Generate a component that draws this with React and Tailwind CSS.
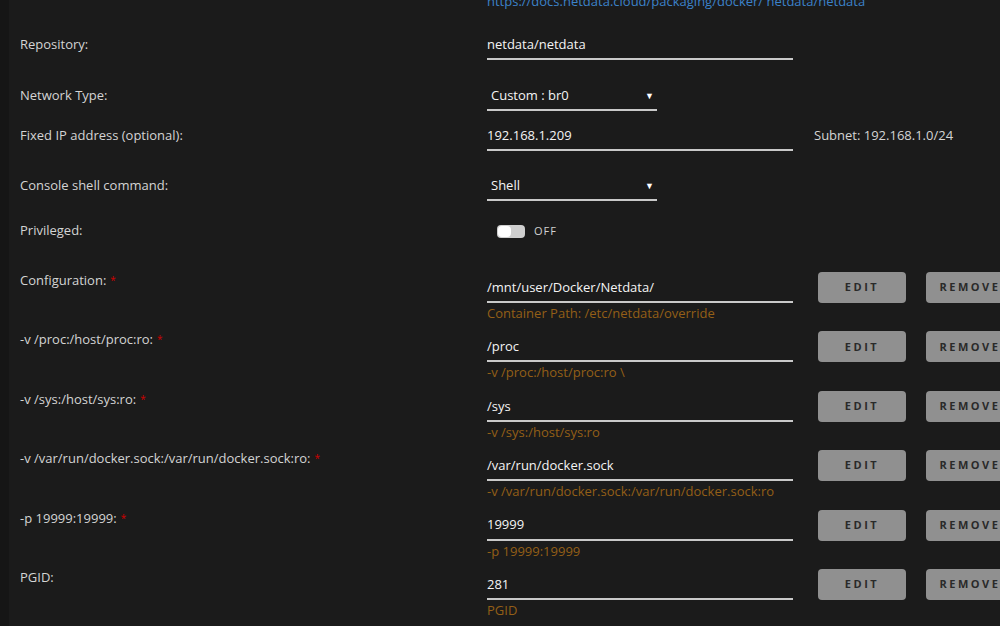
import { useState } from 'react'

const font = { fontFamily: '"Open Sans", "Noto Sans", sans-serif' }

const paths = [
  {
    label: 'Configuration:',
    value: '/mnt/user/Docker/Netdata/',
    help: 'Container Path: /etc/netdata/override',
    required: true
  },
  { label: '-v /proc:/host/proc:ro:', value: '/proc', help: '-v /proc:/host/proc:ro \\', required: true },
  { label: '-v /sys:/host/sys:ro:', value: '/sys', help: '-v /sys:/host/sys:ro', required: true },
  {
    label: '-v /var/run/docker.sock:/var/run/docker.sock:ro:',
    value: '/var/run/docker.sock',
    help: '-v /var/run/docker.sock:/var/run/docker.sock:ro',
    required: true
  },
  { label: '-p 19999:19999:', value: '19999', help: '-p 19999:19999', required: true },
  { label: 'PGID:', value: '281', help: 'PGID', required: false }
]

const Label = ({ children, required }) => (
  <div className="w-[467px] shrink-0 text-[13px] text-[#d4d4d4] whitespace-nowrap">
    {children}
    {required && <span className="ml-1 text-[10px] align-top text-[#d00000]">*</span>}
  </div>
)

const TextField = ({ value, className = 'w-[306px]' }) => (
  <div className={`${className} h-[31px] pt-[2px] flex items-center border-b-2 border-[#c9c9c9] text-[13px] font-medium text-[#f4f4f4]`}>
    {value}
  </div>
)

const SelectField = ({ value }) => (
  <div className="w-[170px] h-[31px] pt-[2px] flex items-center justify-between pl-1 pr-[3px] border-b-2 border-[#c9c9c9] text-[13px] font-medium text-[#f4f4f4]">
    <span>{value}</span>
    <span className="text-[9px] text-white">▼</span>
  </div>
)

const Button = ({ children }) => (
  <button className="w-[88px] h-[31px] shrink-0 rounded-[4px] bg-[#909090] text-[11px] font-bold tracking-[2.5px] text-[#2a2a2a]">
    {children}
  </button>
)

const Toggle = () => {
  const [on, setOn] = useState(false)
  return (
    <div className="flex items-center gap-[9px] pl-[10px]">
      <button
        onClick={() => setOn(!on)}
        className="w-[28px] h-[13px] rounded-[4px] bg-[#cfcfcf] flex items-center p-[1px]"
      >
        <span className="w-[13px] h-[11px] rounded-[4px] bg-white" />
      </button>
      <span className="text-[11px] tracking-[1px] text-[#d0d0d0]">{on ? 'ON' : 'OFF'}</span>
    </div>
  )
}

const App = () => {
  return (
    <div className="w-[1000px] h-[626px] overflow-hidden flex bg-[#1b1b1b]" style={font}>
      <div className="w-[9px] shrink-0 bg-[#161616]" />
      <div className="flex-1 pl-[11px] overflow-hidden">
        <div className="flex h-[18px] -mt-[7px] items-center">
          <div className="w-[467px] shrink-0" />
          <span className="text-[13px] text-[#3c82c9] whitespace-nowrap">
            https://docs.netdata.cloud/packaging/docker/ netdata/netdata
          </span>
        </div>

        <div className="flex items-center mt-[18px]">
          <Label>Repository:</Label>
          <TextField value="netdata/netdata" />
        </div>

        <div className="flex items-center mt-[20px]">
          <Label>Network Type:</Label>
          <SelectField value="Custom : br0" />
        </div>

        <div className="flex items-center mt-[9px]">
          <Label>Fixed IP address (optional):</Label>
          <TextField value="192.168.1.209" />
          <span className="ml-[21px] text-[13px] text-[#d4d4d4] whitespace-nowrap">Subnet: 192.168.1.0/24</span>
        </div>

        <div className="flex items-center mt-[19px]">
          <Label>Console shell command:</Label>
          <SelectField value="Shell" />
        </div>

        <div className="flex items-center mt-[14px] h-[32px]">
          <Label>Privileged:</Label>
          <Toggle />
        </div>

        <div className="mt-[25px]">
          {paths.map((p) => (
            <div key={p.label} className="flex h-[59.4px]">
              <div className="leading-4">
                <Label required={p.required}>{p.label}</Label>
              </div>
              <div className="w-[306px] shrink-0">
                <TextField value={p.value} className="w-[306px]" />
                <div className="mt-[2px] text-[13px] leading-[16px] text-[#935f17] whitespace-nowrap">{p.help}</div>
              </div>
              <div className="flex gap-5 ml-[25px]">
                <Button>EDIT</Button>
                <Button>REMOVE</Button>
              </div>
            </div>
          ))}
        </div>
      </div>
    </div>
  )
}

export default App
